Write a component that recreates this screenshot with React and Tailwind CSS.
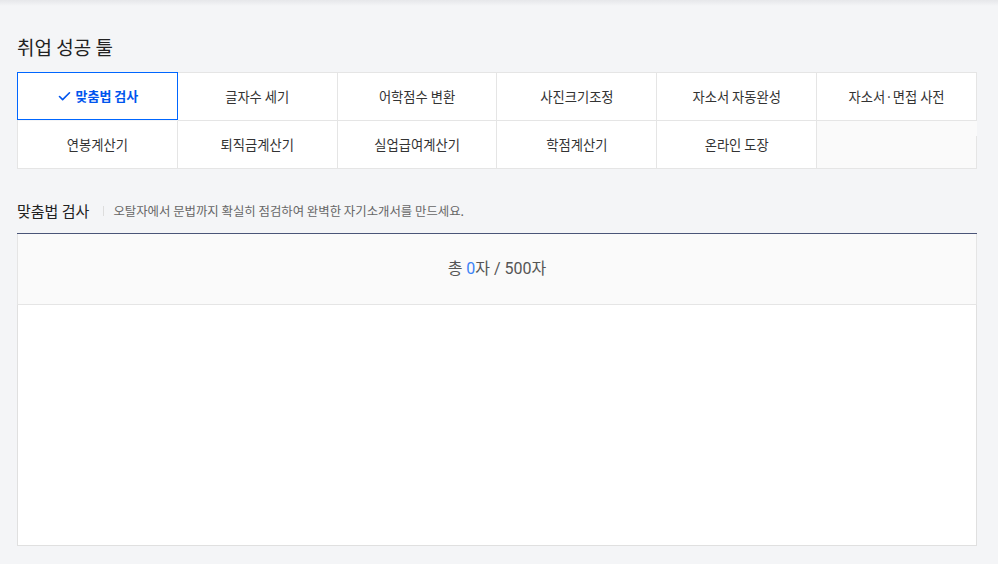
import { Check } from "lucide-react";

const TOOLS = [
  "맞춤법 검사",
  "글자수 세기",
  "어학점수 변환",
  "사진크기조정",
  "자소서 자동완성",
  "자소서·면접 사전",
  "연봉계산기",
  "퇴직금계산기",
  "실업급여계산기",
  "학점계산기",
  "온라인 도장",
];

export default function App() {
  const active = 0;
  return (
    <div
      className="min-h-[564px] bg-[#f4f5f7] relative"
      style={{ fontFamily: '"Noto Sans CJK KR", "Noto Sans", sans-serif' }}
    >
      <div className="absolute inset-x-0 top-0 h-[6px] bg-gradient-to-b from-[#e6e7ea] to-[#f4f5f7]" />
      <div className="pl-[17px] pt-[33px] w-[977px]">
        <h1 className="text-[19px] leading-[27px] text-[#222] font-normal">취업 성공 툴</h1>

        <div className="mt-[12px] grid grid-cols-6 border-t border-l border-[#e5e5e5] w-[960px]">
          {TOOLS.map((name, i) =>
            i === active ? (
              <div
                key={name}
                className="h-[48px] flex items-center justify-center gap-1 bg-white border border-[#0066ff] -mt-px -ml-px text-[13px] font-bold text-[#0055ee]"
              >
                <Check size={15} strokeWidth={2.6} />
                {name}
              </div>
            ) : (
              <div
                key={name}
                className="h-[48px] flex items-center justify-center bg-white border-r border-b border-[#e5e5e5] text-[13.3px] text-[#333]"
              >
                {name}
              </div>
            )
          )}
          <div className="h-[48px] bg-[#fafafa] border-b border-[#e5e5e5] flex justify-end items-end">
            <div className="w-px h-[32px] bg-[#e5e5e5]" />
          </div>
        </div>

        <div className="mt-[31px] flex items-center h-[22px]">
          <h2 className="text-[15px] text-[#222] font-normal">맞춤법 검사</h2>
          <span className="ml-[14px] mr-[9px] w-px h-[10px] bg-[#ddd]" />
          <p className="text-[12.4px] text-[#666]">
            오탈자에서 문법까지 확실히 점검하여 완벽한 자기소개서를 만드세요.
          </p>
        </div>

        <div className="mt-[11px] w-[960px] border-t border-[#4a5578] bg-white">
          <div
            className="h-[71px] bg-[#fafafa] border-x border-b border-[#e5e5e5] flex items-center justify-center text-[16px] text-[#555]"
            style={{ fontFamily: 'Roboto, "Noto Sans CJK KR", sans-serif' }}
          >
            총&nbsp;<span className="text-[#3b82f6]">0</span>자 / 500자
          </div>
          <div className="h-[241px] border-x border-b border-[#e0e0e0] bg-white" />
        </div>
      </div>
    </div>
  );
}
